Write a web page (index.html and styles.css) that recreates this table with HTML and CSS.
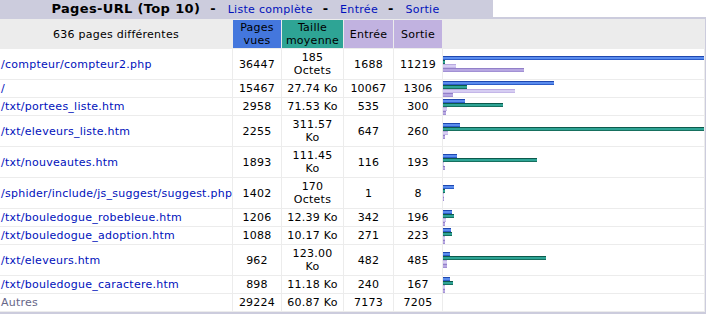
FILE: index.html
```html
<!DOCTYPE html>
<html lang="fr">
<head>
<meta charset="utf-8">
<title>Pages-URL (Top 10)</title>
<link rel="stylesheet" href="styles.css">
</head>
<body>
<div class="panel">
  <div class="title-row">
    <div class="title"><span class="title-main">Pages-URL (Top 10)</span><span class="sep">-</span><a href="#">Liste complète</a><span class="sep">-</span><a href="#">Entrée</a><span class="sep">-</span><a href="#">Sortie</a></div>
    <div class="blank"></div>
  </div>
  <div class="frame">
    <table class="data">
      <thead>
        <tr>
          <th class="c-url">636 pages différentes</th>
          <th class="c-pages">Pages<br>vues</th>
          <th class="c-size">Taille<br>moyenne</th>
          <th class="c-entry">Entrée</th>
          <th class="c-exit">Sortie</th>
          <th class="c-graph">&nbsp;</th>
        </tr>
      </thead>
      <tbody>
        <tr>
          <td class="url"><a href="#">/compteur/compteur2.php</a></td>
          <td>36447</td><td>185<br>Octets</td><td>1688</td><td>11219</td>
          <td class="graph"><div class="bar bp" style="width:261px"></div><div class="bar bk" style="width:2px"></div><div class="bar be" style="width:13px"></div><div class="bar bx" style="width:81px"></div></td>
        </tr>
        <tr>
          <td class="url"><a href="#">/</a></td>
          <td>15467</td><td>27.74 Ko</td><td>10067</td><td>1306</td>
          <td class="graph"><div class="bar bp" style="width:111px"></div><div class="bar bk" style="width:24px"></div><div class="bar be" style="width:72px"></div><div class="bar bx" style="width:10px"></div></td>
        </tr>
        <tr>
          <td class="url"><a href="#">/txt/portees_liste.htm</a></td>
          <td>2958</td><td>71.53 Ko</td><td>535</td><td>300</td>
          <td class="graph"><div class="bar bp" style="width:22px"></div><div class="bar bk" style="width:60px"></div><div class="bar be" style="width:4px"></div><div class="bar bx" style="width:3px"></div></td>
        </tr>
        <tr>
          <td class="url"><a href="#">/txt/eleveurs_liste.htm</a></td>
          <td>2255</td><td>311.57<br>Ko</td><td>647</td><td>260</td>
          <td class="graph"><div class="bar bp" style="width:17px"></div><div class="bar bk" style="width:261px"></div><div class="bar be" style="width:5px"></div><div class="bar bx" style="width:2px"></div></td>
        </tr>
        <tr>
          <td class="url"><a href="#">/txt/nouveautes.htm</a></td>
          <td>1893</td><td>111.45<br>Ko</td><td>116</td><td>193</td>
          <td class="graph"><div class="bar bp" style="width:14px"></div><div class="bar bk" style="width:94px"></div><div class="bar be" style="width:1px"></div><div class="bar bx" style="width:2px"></div></td>
        </tr>
        <tr>
          <td class="url"><a href="#">/sphider/include/js_suggest/suggest.php</a></td>
          <td>1402</td><td>170<br>Octets</td><td>1</td><td>8</td>
          <td class="graph"><div class="bar bp" style="width:11px"></div><div class="bar bk" style="width:2px"></div><div class="bar be" style="width:1px"></div><div class="bar bx" style="width:1px"></div></td>
        </tr>
        <tr>
          <td class="url"><a href="#">/txt/bouledogue_robebleue.htm</a></td>
          <td>1206</td><td>12.39 Ko</td><td>342</td><td>196</td>
          <td class="graph"><div class="bar bp" style="width:9px"></div><div class="bar bk" style="width:11px"></div><div class="bar be" style="width:3px"></div><div class="bar bx" style="width:2px"></div></td>
        </tr>
        <tr>
          <td class="url"><a href="#">/txt/bouledogue_adoption.htm</a></td>
          <td>1088</td><td>10.17 Ko</td><td>271</td><td>223</td>
          <td class="graph"><div class="bar bp" style="width:8px"></div><div class="bar bk" style="width:9px"></div><div class="bar be" style="width:2px"></div><div class="bar bx" style="width:2px"></div></td>
        </tr>
        <tr>
          <td class="url"><a href="#">/txt/eleveurs.htm</a></td>
          <td>962</td><td>123.00<br>Ko</td><td>482</td><td>485</td>
          <td class="graph"><div class="bar bp" style="width:7px"></div><div class="bar bk" style="width:103px"></div><div class="bar be" style="width:4px"></div><div class="bar bx" style="width:4px"></div></td>
        </tr>
        <tr>
          <td class="url"><a href="#">/txt/bouledogue_caractere.htm</a></td>
          <td>898</td><td>11.18 Ko</td><td>240</td><td>167</td>
          <td class="graph"><div class="bar bp" style="width:7px"></div><div class="bar bk" style="width:10px"></div><div class="bar be" style="width:2px"></div><div class="bar bx" style="width:2px"></div></td>
        </tr>
        <tr>
          <td class="url other">Autres</td>
          <td>29224</td><td>60.87 Ko</td><td>7173</td><td>7205</td>
          <td class="graph"></td>
        </tr>
      </tbody>
    </table>
  </div>
</div>
</body>
</html>
```
FILE: styles.css
```css
html, body {
  margin: 0;
  padding: 0;
  background: #ffffff;
}
body {
  font-family: "DejaVu Sans", Verdana, sans-serif;
  font-size: 11px;
  letter-spacing: 0.25px;
  color: #000000;
  overflow: hidden;
}
a {
  color: #0011bb;
  text-decoration: none;
}
.panel {
  margin-left: -2px;
  width: 708px;
}
.title-row {
  display: flex;
  height: 17px;
}
.title {
  width: 495px;
  background: #ccccdd;
  text-align: center;
  font-weight: bold;
  font-size: 13px;
  letter-spacing: 0;
  line-height: 17px;
  white-space: nowrap;
}
.title-main {
  letter-spacing: 0.35px;
}
.sep {
  margin: 0 12px 0 10px;
}
.title a {
  font-weight: normal;
  font-size: 11px;
  letter-spacing: 0.3px;
}
.blank {
  flex: 1;
  background: #ffffff;
}
.frame {
  background: #ccccdd;
  padding: 2px 1px 2px 2px;
}
.data {
  border-collapse: separate;
  border-spacing: 0;
  table-layout: fixed;
  width: 705px;
  background: #ffffff;
  border-top: 1px solid #ececec;
}
.data th,
.data td {
  box-sizing: border-box;
  border-right: 1px solid #ececec;
  border-bottom: 1px solid #ececec;
  padding: 2px;
  line-height: 13px;
  font-size: 11px;
  font-weight: normal;
  text-align: center;
  vertical-align: middle;
  white-space: nowrap;
}
.data th {
  padding: 1px;
  background: #ececec;
}
.data th.c-url { width: 233px; }
.data th.c-pages { width: 49px; background: #4477dd; }
.data th.c-size { width: 62px; background: #2ea495; }
.data th.c-entry { width: 50px; background: #c1b2e0; }
.data th.c-exit { width: 49px; background: #c1b2e0; }
.data th.c-graph { width: 262px; }
.data td.url {
  text-align: left;
  padding-left: 1px;
}
.data td.other {
  color: #666688;
}
.data td.graph {
  padding: 0;
  text-align: left;
}
.bar {
  height: 4px;
}
.bp {
  background: linear-gradient(#1f48b0 0 1px, #5a8cee 1px 3px, #2c5cc8 3px 4px);
}
.bk {
  background: linear-gradient(#0d5a4c 0 1px, #2ea495 1px 3px, #17705f 3px 4px);
}
.be {
  background: linear-gradient(#b9a9e0 0 1px, #d6cdf2 1px 3px, #c4b6e8 3px 4px);
}
.bx {
  background: linear-gradient(#9280c8 0 1px, #b7a7e2 1px 3px, #a291d4 3px 4px);
}
```
